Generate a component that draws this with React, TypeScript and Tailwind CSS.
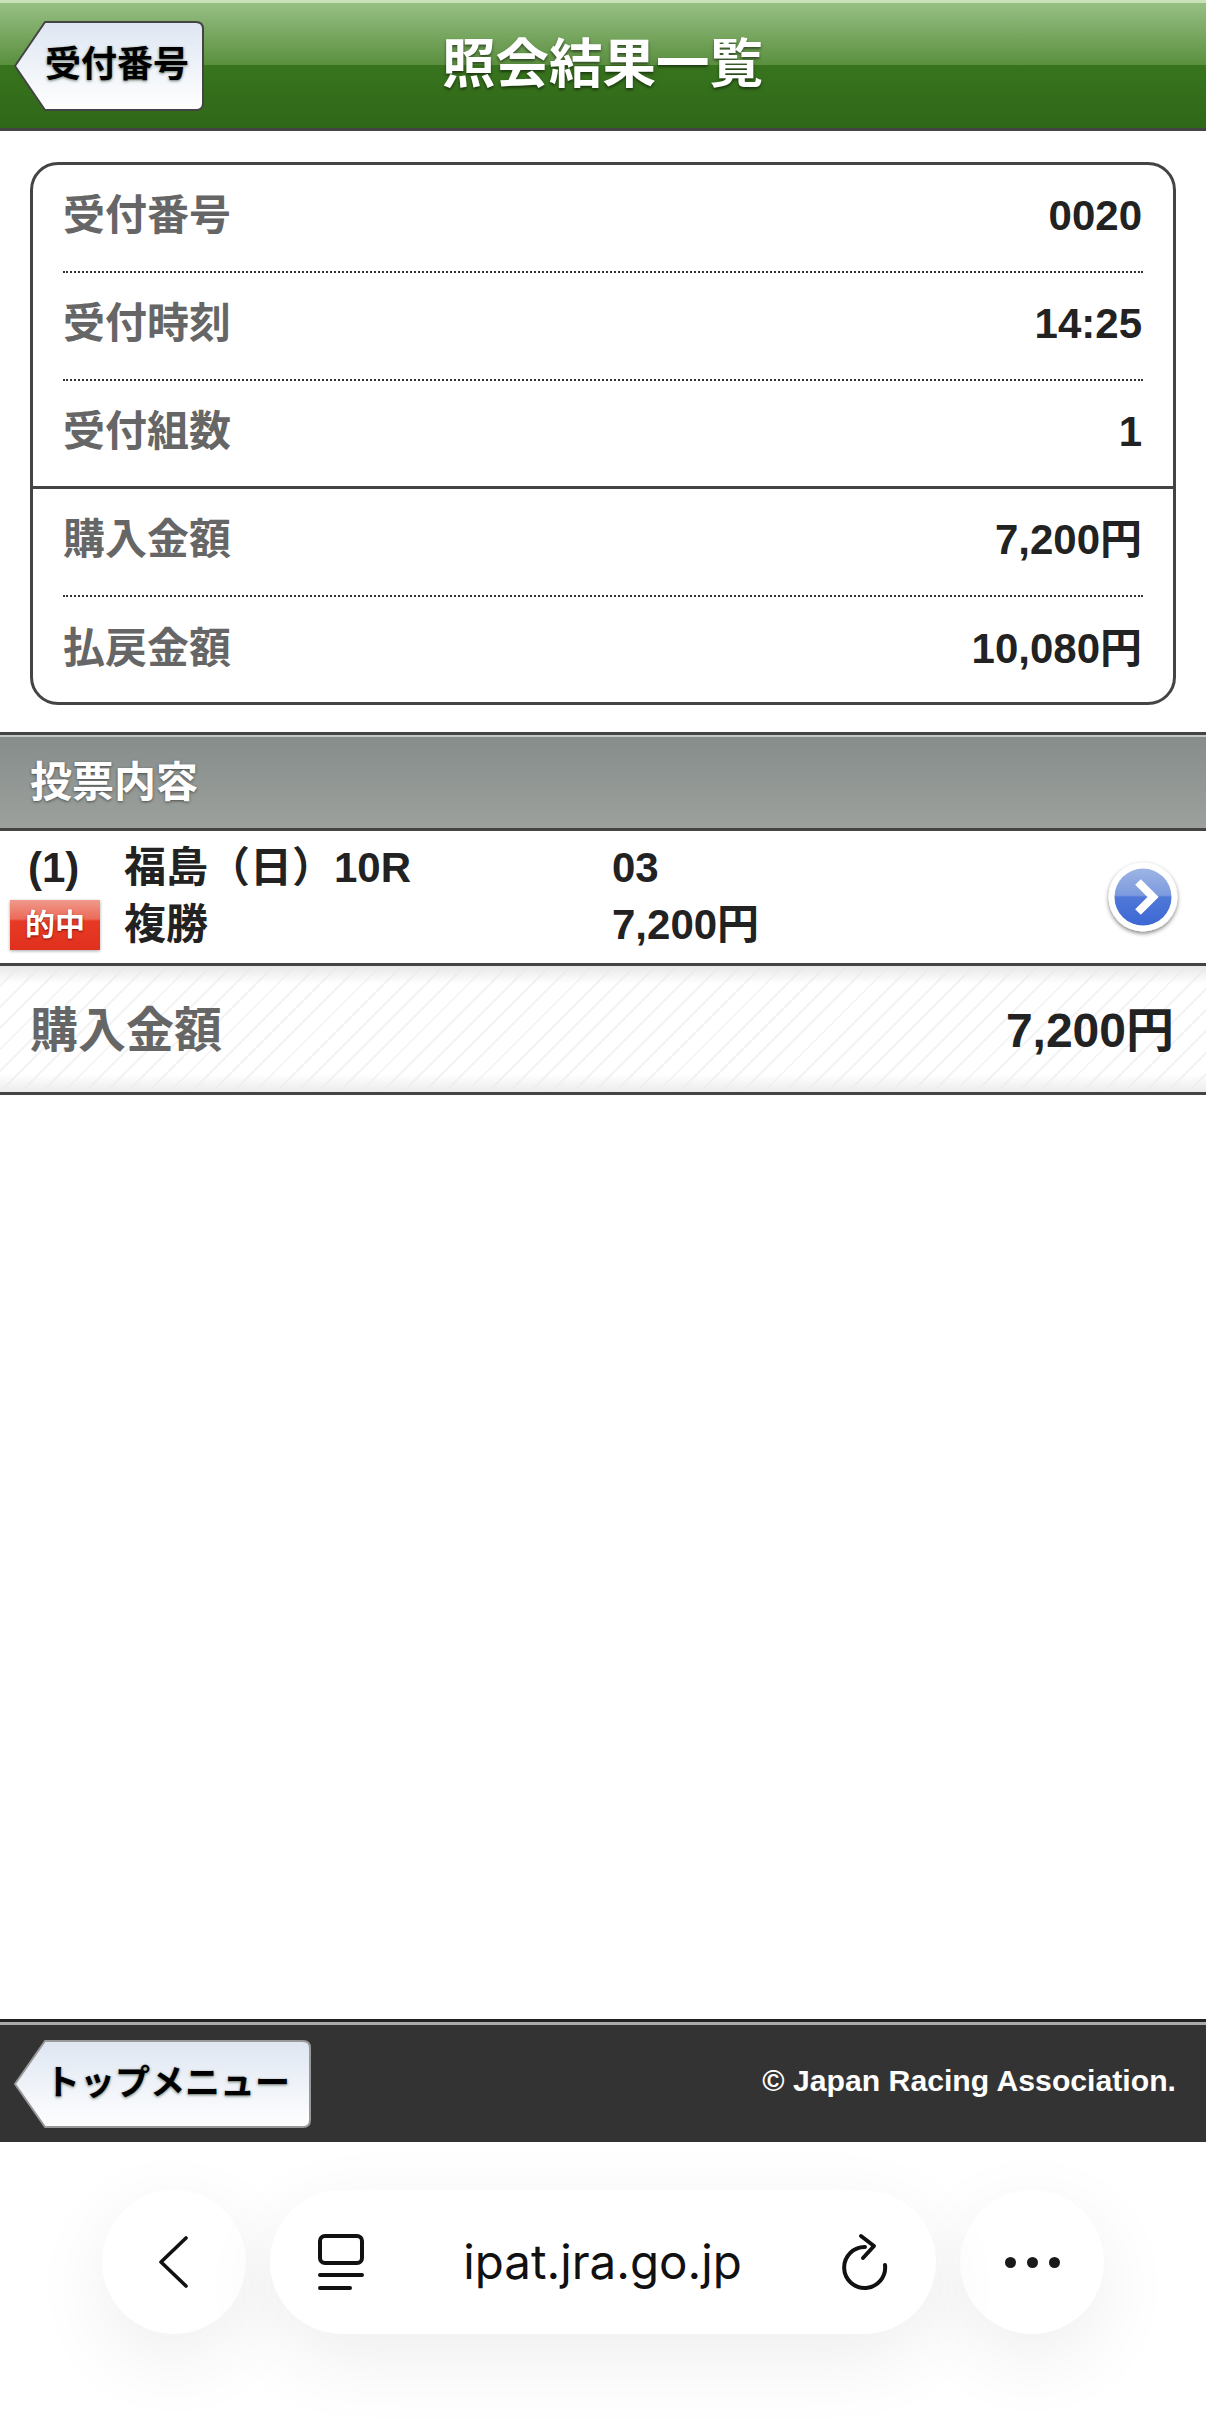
const sans = "[font-family:'Liberation_Sans','Noto_Sans_CJK_JP',sans-serif]";

function BackShape({ w, h, stroke, id }: { w: number; h: number; stroke: string; id: string }) {
  return (
    <svg className="absolute inset-0" width={w} height={h} viewBox={`0 0 ${w} ${h}`}>
      <defs>
        <linearGradient id={id} x1="0" y1="0" x2="0" y2="1">
          <stop offset="0" stopColor="#dee6f2" />
          <stop offset="1" stopColor="#ffffff" />
        </linearGradient>
      </defs>
      <path
        d={`M31 1 H${w - 8} Q${w - 1} 1 ${w - 1} 8 V${h - 8} Q${w - 1} ${h - 1} ${w - 8} ${h - 1} H31 L1 ${h / 2} Z`}
        fill={`url(#${id})`}
        stroke={stroke}
        strokeWidth="2"
        strokeLinejoin="round"
      />
    </svg>
  );
}

function BackButton({ label, w, h, stroke, id, pl, size }: { label: string; w: string; h: string; stroke: string; id: string; pl: string; size: string }) {
  const wn = parseInt(w.replace(/\D/g, ""), 10);
  const hn = parseInt(h.replace(/\D/g, ""), 10);
  return (
    <div className={`relative flex items-center ${w} ${h} ${pl}`}>
      <BackShape w={wn} h={hn} stroke={stroke} id={id} />
      <span className={`relative ${size} leading-none font-bold text-black whitespace-nowrap pb-[2px] [text-shadow:0_1px_3px_rgba(40,60,40,0.7)]`}>
        {label}
      </span>
    </div>
  );
}

function InfoRow({ label, value, dotted, solid }: { label: string; value: string; dotted?: boolean; solid?: boolean }) {
  return (
    <div className={solid ? "border-b-[3px] border-[#444]" : ""}>
      <div
        className={`mx-[30px] flex items-center justify-between pb-[4px] ${solid ? "h-[105px]" : "h-[108px]"} ${
          dotted ? "border-b-2 border-dotted border-[#333]" : ""
        } text-[42px] leading-none font-bold`}
      >
        <span className="text-[#666]">{label}</span>
        <span className="text-[#222] pr-[1px]">{value}</span>
      </div>
    </div>
  );
}

export default function App() {
  return (
    <div className={`flex flex-col w-[1206px] h-[2436px] bg-white overflow-hidden ${sans}`}>
      {/* Header */}
      <header className="relative flex items-center shrink-0 h-[131px] border-b-[3px] border-[#444] border-t-[3px] border-t-[#c9e2ba] pl-[14px] bg-[linear-gradient(#97bf84_0,#5a8f3e_50%,#38741e_50%,#2f6718_100%)]">
        <BackButton label="受付番号" w="w-[190px]" h="h-[90px]" stroke="#444" id="b1" pl="pl-[31px]" size="text-[36px]" />
        <h1 className="absolute left-[442px] top-[35px] text-[53.5px] leading-none font-bold text-white [text-shadow:0_2px_3px_rgba(0,0,0,0.5)]">
          照会結果一覧
        </h1>
      </header>

      {/* Info card */}
      <div className="shrink-0 mx-[30px] mt-[31px] h-[543px] rounded-[28px] border-[3px] border-[#444] bg-white overflow-hidden">
        <InfoRow label="受付番号" value="0020" dotted />
        <InfoRow label="受付時刻" value="14:25" dotted />
        <InfoRow label="受付組数" value="1" solid />
        <InfoRow label="購入金額" value="7,200円" dotted />
        <InfoRow label="払戻金額" value="10,080円" />
      </div>

      {/* Section title */}
      <div className="shrink-0 mt-[27px] border-y-[3px] border-[#444]">
        <div className="flex items-center h-[93px] pl-[30px] border-t-2 border-[#c3cac3] bg-[linear-gradient(#878d8a,#9ca19e)]">
          <span className="text-[42px] leading-none font-bold text-white [text-shadow:0_1px_3px_rgba(0,0,0,0.5)]">投票内容</span>
        </div>
      </div>

      {/* Bet row */}
      <div className="shrink-0 relative flex flex-col justify-center h-[132px] pb-[2px] text-[42px] leading-[57px] font-bold text-[#222]">
        <div className="flex items-center">
          <span className="w-[124px] pl-[28px]">(1)</span>
          <span className="w-[488px] whitespace-nowrap">福島（日）10R</span>
          <span>03</span>
        </div>
        <div className="flex items-center">
          <div className="w-[124px] pl-[10px]">
            <div className="flex items-center justify-center w-[90px] h-[50px] text-[30px] leading-none text-white shadow-[0_1px_3px_rgba(0,0,0,0.35)] [text-shadow:0_1px_2px_rgba(100,0,0,0.8)] bg-[linear-gradient(#f09a8c_0,#ec6a58_38%,#e63a26_42%,#e0301e_100%)]">
              的中
            </div>
          </div>
          <span className="w-[488px]">複勝</span>
          <span>7,200円</span>
        </div>
        <svg className="absolute left-[1103px] top-[26px]" width="80" height="84" viewBox="0 0 80 84">
          <defs>
            <linearGradient id="blue" x1="0" y1="0" x2="0" y2="1">
              <stop offset="0" stopColor="#9db4e4" />
              <stop offset="0.47" stopColor="#7c9ade" />
              <stop offset="0.5" stopColor="#5078d8" />
              <stop offset="1" stopColor="#3c68d4" />
            </linearGradient>
            <filter id="sh" x="-20%" y="-20%" width="140%" height="140%">
              <feDropShadow dx="0" dy="2" stdDeviation="2" floodColor="#000" floodOpacity="0.5" />
            </filter>
          </defs>
          <circle cx="40" cy="40" r="34.5" fill="#fff" filter="url(#sh)" />
          <circle cx="40" cy="40" r="28.5" fill="url(#blue)" />
          <path d="M35 25 L50 40 L35 55" fill="none" stroke="#fff" strokeWidth="8" />
        </svg>
      </div>

      {/* Total */}
      <div className="shrink-0 border-y-[3px] border-[#444]">
        <div className="flex items-center justify-between h-[126px] pt-[4px] pl-[30px] pr-[32px] bg-[linear-gradient(#e8e8e8_0,rgba(255,255,255,0)_18px,rgba(255,255,255,0)_108px,#ececec_100%),repeating-linear-gradient(135deg,#ffffff_0,#ffffff_13px,#f3f3f3_13px,#f3f3f3_15px)]">
          <span className="text-[48px] leading-none font-bold text-[#666]">購入金額</span>
          <span className="text-[48px] leading-none font-bold text-[#222]">7,200円</span>
        </div>
      </div>

      <div className="flex-1" />

      {/* Footer */}
      <footer className="shrink-0 border-t-[3px] border-[#222]">
        <div className="flex items-center justify-between h-[120px] pl-[14px] pr-[30px] border-t-[3px] border-[#aaa] bg-[#333]">
          <BackButton label="トップメニュー" w="w-[297px]" h="h-[88px]" stroke="#999" id="b2" pl="pl-[31px]" size="text-[35px]" />
          <span className="text-[30.2px] leading-none font-bold text-white pb-[4px]">© Japan Racing Association.</span>
        </div>
      </footer>

      {/* Browser bar */}
      <div className="shrink-0 flex justify-center gap-[24px] h-[294px] pt-[48px] [font-family:Inter,sans-serif]">
        <div className="flex items-center justify-center w-[144px] h-[144px] rounded-full bg-white shadow-[0_24px_80px_rgba(0,0,0,0.07)]">
          <svg width="32" height="54" viewBox="0 0 32 54" fill="none" stroke="#111" strokeWidth="3.6" strokeLinecap="round" strokeLinejoin="round">
            <path d="M28 3 L3 27 L28 51" />
          </svg>
        </div>
        <div className="relative flex items-center justify-between w-[666px] h-[144px] pl-[48px] pr-[47px] rounded-full bg-white shadow-[0_24px_80px_rgba(0,0,0,0.07)]">
          <svg width="46" height="56" viewBox="0 0 46 56" fill="none" stroke="#111" strokeWidth="4" strokeLinecap="round" strokeLinejoin="round">
            <rect x="2" y="2" width="42" height="27" rx="5" />
            <path d="M2 41 H44 M2 54 H32" />
          </svg>
          <span className="text-[47.5px] leading-none text-[#111]">ipat.jra.go.jp</span>
          <svg width="48" height="58" viewBox="0 0 48 58" fill="none" stroke="#111" strokeWidth="4" strokeLinecap="round" strokeLinejoin="round">
            <path d="M44 32 A20.5 20.5 0 1 1 24 14" />
            <path d="M20 3 L33 13 L22 25" />
          </svg>
        </div>
        <div className="flex items-center justify-center gap-[11px] w-[144px] h-[144px] rounded-full bg-white shadow-[0_24px_80px_rgba(0,0,0,0.07)]">
          <span className="block w-[11px] h-[11px] rounded-full bg-[#1a1a1a]" />
          <span className="block w-[11px] h-[11px] rounded-full bg-[#1a1a1a]" />
          <span className="block w-[11px] h-[11px] rounded-full bg-[#1a1a1a]" />
        </div>
      </div>
    </div>
  );
}
